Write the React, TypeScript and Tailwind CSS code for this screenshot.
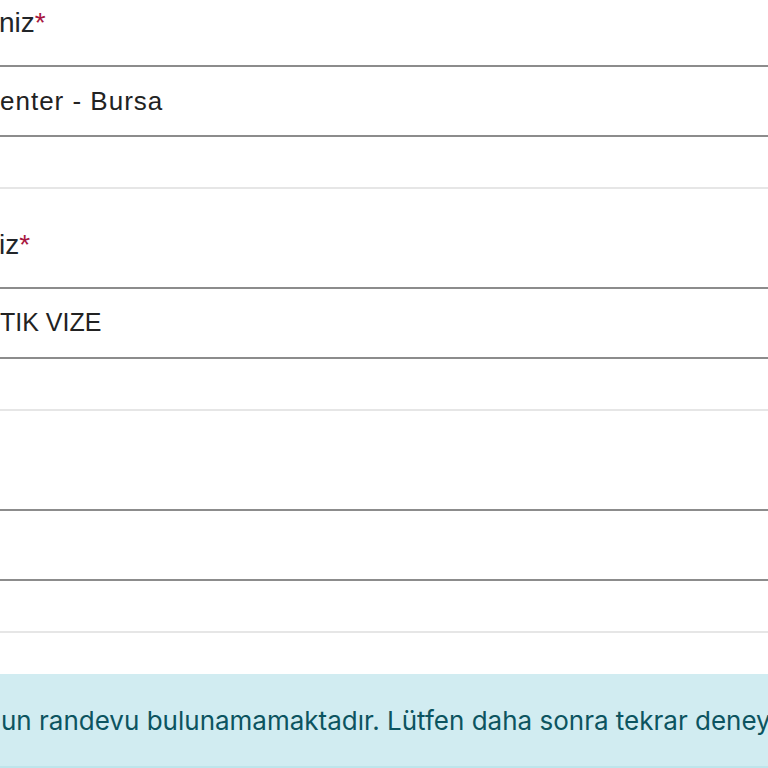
export default function App() {
  const groups = [
    { label: 'niz', value: 'enter - Bursa', wide: true },
    { label: 'iz', value: 'TIK VIZE', wide: false },
    { label: '', value: '', wide: false },
  ]

  return (
    <div className="h-[768px] w-[768px] overflow-hidden bg-white font-['Liberation_Sans',Arial,sans-serif] text-[#212529]">
      <div className="-mt-[33px]">
        {groups.map((g, i) => (
          <div key={i} className="border-b-2 border-[#e6e6e6]">
            {/* Label */}
            <div className="flex h-[98px] items-end pb-[24px]">
              {g.label && (
                <label className="-ml-[1px] whitespace-nowrap text-[28px] leading-9">
                  {g.label}
                  <span className="text-[#a8173f]">*</span>
                </label>
              )}
            </div>

            {/* Select */}
            <div className="flex h-[72px] items-center border-y-2 border-[#8c8c8c] bg-white">
              <span
                className={
                  g.wide
                    ? 'whitespace-nowrap text-[26px] tracking-[1px] text-[#222]'
                    : 'whitespace-nowrap text-[25px] text-[#222]'
                }
              >
                {g.value}
              </span>
            </div>

            <div className="h-[50px]" />
          </div>
        ))}
      </div>

      {/* Alert */}
      <div className="mt-[41px] flex h-[94px] items-center overflow-hidden border-b-2 border-[#bee5eb] bg-[#d1ecf1] text-[#0c5460]">
        <p className="ml-[1px] whitespace-nowrap font-['Inter',sans-serif] text-[26px]">
          un randevu bulunamamaktadır. Lütfen daha sonra tekrar deneyiniz.
        </p>
      </div>
    </div>
  )
}
